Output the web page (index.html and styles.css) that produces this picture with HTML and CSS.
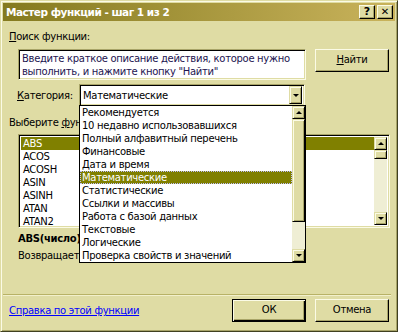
FILE: index.html
```html
<!DOCTYPE html>
<html lang="ru">
<head>
    <meta charset="UTF-8">
    <title>Мастер функций - шаг 1 из 2</title>
    <link rel="stylesheet" href="styles.css">
</head>
<body>
    <div class="window">
        <!-- заголовок окна -->
        <div class="titlebar">
            <span class="title">Мастер функций - шаг 1 из 2</span>
            <span class="tbtn">?</span>
            <span class="tbtn close">✕</span>
        </div>

        <div class="content">
            <div class="lbl first"><u>П</u>оиск функции:</div>
            <div class="searchRow">
                <div class="memo">Введите краткое описание действия, которое нужно выполнить, и нажмите кнопку "Найти"</div>
                <div class="btn find"><u>Н</u>айти</div>
            </div>

            <!-- категория + раскрытый список -->
            <div class="catRow">
                <div class="lbl cat"><u>К</u>атегория:</div>
                <div class="combo">
                    <span class="comboText">Математические</span>
                    <span class="sbtn"><i class="down"></i></span>
                    <div class="popup">
                        <ul class="items">
                            <li>Рекомендуется</li>
                            <li>10 недавно использовавшихся</li>
                            <li>Полный алфавитный перечень</li>
                            <li>Финансовые</li>
                            <li>Дата и время</li>
                            <li class="sel focus">Математические</li>
                            <li>Статистические</li>
                            <li>Ссылки и массивы</li>
                            <li>Работа с базой данных</li>
                            <li>Текстовые</li>
                            <li>Логические</li>
                            <li>Проверка свойств и значений</li>
                        </ul>
                        <div class="vscroll">
                            <span class="sbtn"><i class="up"></i></span>
                            <span class="thumb big"></span>
                            <span class="track"></span>
                            <span class="sbtn"><i class="down"></i></span>
                        </div>
                    </div>
                </div>
            </div>

            <div class="lbl pick">Выберите <u>ф</u>ункцию:</div>
            <div class="funcList">
                <ul class="items">
                    <li class="sel">ABS</li>
                    <li>ACOS</li>
                    <li>ACOSH</li>
                    <li>ASIN</li>
                    <li>ASINH</li>
                    <li>ATAN</li>
                    <li>ATAN2</li>
                </ul>
                <div class="vscroll">
                    <span class="sbtn"><i class="up"></i></span>
                    <span class="thumb small"></span>
                    <span class="track"></span>
                    <span class="sbtn"><i class="down"></i></span>
                </div>
            </div>
            <div class="syntax">ABS(число)</div>
            <div class="descr">Возвращает модуль (абсолютную величину) числа.</div>

            <div class="sep"></div>
            <div class="footer">
                <a class="help" href="#">Справка по этой функции</a>
                <div class="btn ok">ОК</div>
                <div class="btn">Отмена</div>
            </div>
        </div>
    </div>
</body>
</html>
```

FILE: styles.css
```css
/* цвета схемы "Пшеница" */
html, body {
    margin: 0;
    padding: 0;
    background: #dfdca4;
}
body {
    font-family: "DejaVu Sans", sans-serif;
    font-size: 10px;
    letter-spacing: -0.3px;
    color: #000;
}
u {
    text-decoration: underline;
}

/* окно */
.window {
    box-sizing: border-box;
    width: 398px;
    height: 332px;
    display: flex;
    flex-direction: column;
    background: #dfdca4;
    border: 1px solid;
    border-color: #dfdca4 #404020 #404020 #dfdca4;
    box-shadow: inset 1px 1px #fbfbe6, inset -1px -1px #a8a468;
    padding: 2px;
}

/* заголовок */
.titlebar {
    height: 18px;
    display: flex;
    align-items: center;
    padding: 0 2px 0 3px;
    background: linear-gradient(to right, #847a1e, #c9b35c);
}
.title {
    flex: 1;
    color: #fff;
    font-weight: bold;
    font-size: 10.5px;
    letter-spacing: -0.5px;
}
.tbtn {
    box-sizing: border-box;
    width: 16px;
    height: 14px;
    margin-left: 2px;
    background: #dfdca4;
    border: 1px solid;
    border-color: #fbfbe6 #000 #000 #fbfbe6;
    box-shadow: inset -1px -1px #a8a468;
    font-weight: bold;
    font-size: 11px;
    letter-spacing: 0;
    line-height: 12px;
    text-align: center;
}
.close {
    font-size: 10px;
}

/* содержимое */
.content {
    flex: 1;
    display: flex;
    flex-direction: column;
    padding: 0 5px 7px 6px;
}
.lbl {
    line-height: 13px;
    height: 13px;
}
.first {
    margin-top: 9px;
}

/* вдавленная рамка */
.memo, .combo, .funcList {
    box-sizing: border-box;
    background: #fff;
    border: 1px solid;
    border-color: #a8a468 #fbfbe6 #fbfbe6 #a8a468;
    box-shadow: inset 1px 1px #000, inset -1px -1px #dfdca4;
}

/* выпуклая кнопка */
.btn {
    box-sizing: border-box;
    width: 74px;
    height: 23px;
    line-height: 20px;
    text-align: center;
    border: 1px solid;
    border-color: #fbfbe6 #000 #000 #fbfbe6;
    box-shadow: inset -1px -1px #a8a468;
}

.searchRow {
    display: flex;
    align-items: flex-start;
    margin-top: 6px;
}
.memo {
    margin-left: 9px;
    width: 288px;
    height: 31px;
    padding: 2px 3px;
    line-height: 13px;
    color: #1c1450;
}
.find {
    margin-left: 9px;
}

.catRow {
    display: flex;
    align-items: center;
    margin-top: 4px;
}
.cat {
    margin-left: 8px;
    width: 62px;
}
.combo {
    position: relative;
    width: 226px;
    height: 22px;
    display: flex;
    align-items: center;
    padding: 2px;
}
.comboText {
    flex: 1;
    padding-left: 1px;
    line-height: 13px;
}
.combo > .sbtn {
    height: 18px;
}

/* кнопки прокрутки */
.sbtn {
    box-sizing: border-box;
    width: 13px;
    height: 13px;
    flex: none;
    display: flex;
    align-items: center;
    justify-content: center;
    background: #dfdca4;
    border: 1px solid;
    border-color: #dfdca4 #000 #000 #dfdca4;
    box-shadow: inset 1px 1px #fbfbe6, inset -1px -1px #a8a468;
}
.down, .up {
    width: 0;
    height: 0;
    border-left: 3px solid transparent;
    border-right: 3px solid transparent;
}
.down {
    border-top: 3px solid #000;
}
.up {
    border-bottom: 3px solid #000;
}

/* выпадающий список категорий */
.popup {
    position: absolute;
    top: 20px;
    left: -1px;
    z-index: 10;
    box-sizing: border-box;
    width: 227px;
    height: 158px;
    display: flex;
    background: #fff;
    border: 1px solid #000;
}
.items {
    flex: 1;
    margin: 0;
    padding: 0;
    list-style: none;
    overflow: hidden;
}
.items li {
    height: 13px;
    line-height: 13px;
    padding-left: 2px;
    white-space: nowrap;
}
.items .sel {
    background: #808000;
    color: #fff;
}
.focus {
    outline: 1px dotted #c0c0ff;
    outline-offset: -1px;
}
.vscroll {
    width: 13px;
    display: flex;
    flex-direction: column;
}
.thumb {
    box-sizing: border-box;
    flex: none;
    background: #dfdca4;
    border: 1px solid;
    border-color: #dfdca4 #000 #000 #dfdca4;
    box-shadow: inset 1px 1px #fbfbe6, inset -1px -1px #a8a468;
}
.big {
    height: 103px;
}
.small {
    height: 9px;
}
.track {
    flex: 1;
    background: #efeed4;
}

.pick {
    margin-top: 10px;
}
.funcList {
    margin-top: 5px;
    margin-left: 9px;
    height: 94px;
    display: flex;
    padding: 2px;
}
.syntax {
    margin: 4px 0 0 9px;
    font-weight: bold;
    line-height: 13px;
}
.descr {
    margin: 4px 0 0 9px;
    line-height: 13px;
    white-space: nowrap;
}

/* разделитель и кнопки внизу */
.sep {
    margin: auto -1px 0 -6px;
    height: 1px;
    background: #b8b266;
    border-bottom: 1px solid #f2f0cc;
}
.footer {
    display: flex;
    align-items: center;
    margin-top: 3px;
}
.help {
    flex: 1;
    color: #0000ff;
    text-decoration: underline;
}
.ok {
    border-color: #000;
    box-shadow: inset 1px 1px #fbfbe6, inset -1px -1px #000, inset -2px -2px #a8a468;
    margin-right: 9px;
}
.footer .btn:last-child {
    margin-right: 1px;
}
```
